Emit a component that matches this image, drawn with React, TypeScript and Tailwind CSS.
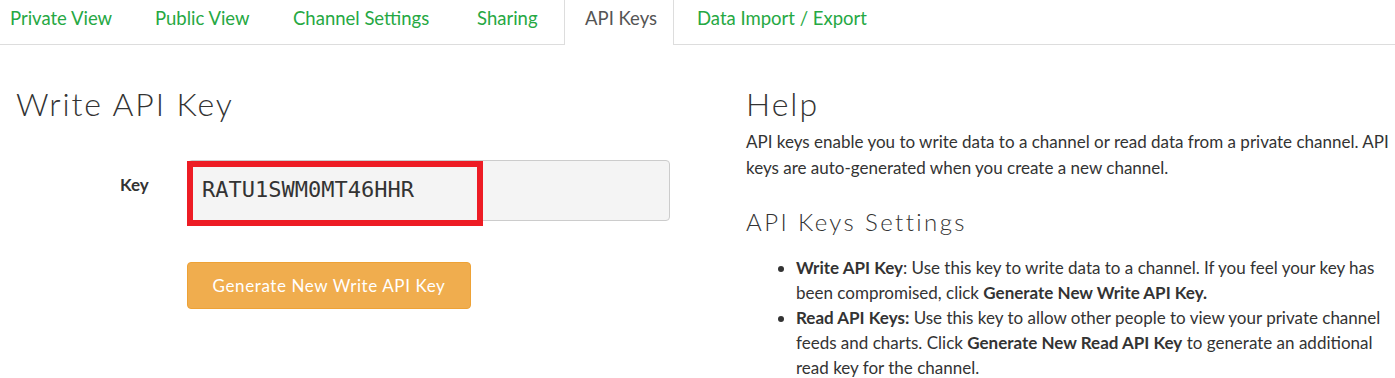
import React from 'react';

const tabs = [
  { label: 'Private View', w: 'w-[142px]' },
  { label: 'Public View', w: 'w-[135px]' },
  { label: 'Channel Settings', w: 'w-[181px]' },
  { label: 'Sharing', w: 'w-[104px]' },
  { label: 'API Keys', w: 'w-[110px]', active: true },
  { label: 'Data Import / Export', w: 'w-[209px]' },
];

export default function App() {
  return (
    <div className="w-[1395px] h-[378px] overflow-hidden bg-white text-[#333] font-['Lato',sans-serif]">
      {/* TABS */}
      <div className="h-[45px] border-b border-[#ddd] flex items-end gap-[3px] -ml-[10px]">
        {tabs.map((t) =>
          t.active ? (
            <div
              key={t.label}
              className={`${t.w} h-[45px] -mb-px bg-white border-x border-[#ddd] pl-5 pt-[5px] text-[18.5px] text-[#555] whitespace-nowrap`}
            >
              {t.label}
            </div>
          ) : (
            <div key={t.label} className={`${t.w} h-[44px] pl-5 pt-[5px] text-[18.5px] text-[#26a843] whitespace-nowrap`}>
              {t.label}
            </div>
          )
        )}
      </div>

      <div className="flex">
        {/* LEFT: WRITE KEY */}
        <div className="w-[746px] pl-4 pt-[41px]">
          <h1 className="text-[32px] font-light leading-[36px] tracking-[1.9px]">Write API Key</h1>

          <div className="flex items-start mt-[38px]">
            <label className="w-[172px] pl-[104px] pt-[12px] text-[17px] font-bold">Key</label>
            <div className="relative">
              <div className="w-[482px] h-[61px] bg-[#f4f4f4] border border-[#ccc] rounded-[4px] pl-[13px] pt-[14px] font-['DejaVu_Sans_Mono',monospace] text-[22px] leading-[30px] text-[#333]">
                RATU1SWM0MT46HHR
              </div>
              <div className="absolute left-[-1px] top-[1px] w-[296px] h-[65px] border-[6px] border-[#ed1c24]" />
            </div>
          </div>

          <button className="ml-[171px] mt-[41px] w-[284px] h-[47px] bg-[#f0ad4e] border border-[#eea236] rounded-[4px] text-white text-[17px] tracking-[0.6px]">
            Generate New Write API Key
          </button>
        </div>

        {/* RIGHT: HELP */}
        <div className="flex-1 pr-[6px] pt-[41px]">
          <h1 className="text-[32px] font-light leading-[36px] tracking-[2px]">Help</h1>
          <p className="mt-[7px] text-[17px] leading-[26px]">
            API keys enable you to write data to a channel or read data from a private channel. API keys are
            auto-generated when you create a new channel.
          </p>
          <h2 className="mt-[27px] text-[24px] font-light leading-[28px] tracking-[2.4px]">API Keys Settings</h2>
          <ul className="mt-[19px] pl-[50px] list-disc text-[17px] leading-[25px]">
            <li>
              <b>Write API Key</b>: Use this key to write data to a channel. If you feel your key has been compromised,
              click <b>Generate New Write API Key.</b>
            </li>
            <li>
              <b>Read API Keys:</b> Use this key to allow other people to view your private channel feeds and charts.
              Click <b>Generate New Read API Key</b> to generate an additional read key for the channel.
            </li>
          </ul>
        </div>
      </div>
    </div>
  );
}
